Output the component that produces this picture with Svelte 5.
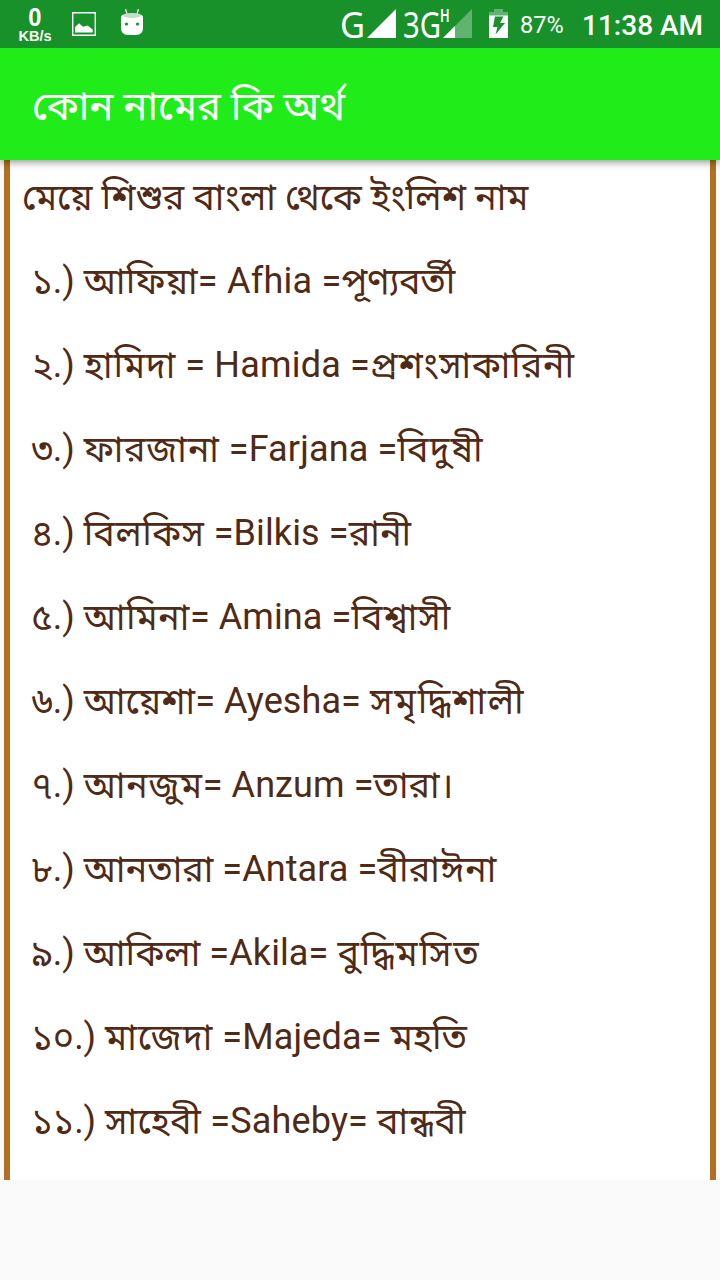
<script>
  // each row: [text, letter spacing in px] chunks
  const rows = [
    [['১', 0], ['.) ', 0], ['আফিয়া', 0.2], ['= Afhia =', 0.25], ['পূণ্যবর্তী', -0.2]],
    [['২', 0], ['.) ', 0], ['হামিদা', 0.8], [' = Hamida =', 0.2], ['প্রশংসাকারিনী', 0.65]],
    [['৩', 0], ['.) ', 0], ['ফারজানা', 0.75], [' =Farjana =', 0.15], ['বিদুষী', 1]],
    [['৪', 0], ['.) ', 0], ['বিলকিস', 0.6], [' =Bilkis =', 0.12], ['রানী', 0.2]],
    [['৫', 0], ['.) ', 0], ['আমিনা', 0.5], ['= Amina =', 0.1], ['বিশ্বাসী', 0.9]],
    [['৬', 0], ['.) ', 0], ['আয়েশা', 0], ['= Ayesha= ', 0.1], ['সমৃদ্ধিশালী', 1.6]],
    [['৭', 0], ['.) ', 0], ['আনজুম', 0.6], ['= Anzum =', 0.1], ['তারা।', 0]],
    [['৮', 0], ['.) ', 0], ['আনতারা', 0], [' =Antara =', 0.1], ['বীরাঈনা', 0.25]],
    [['৯', 0], ['.) ', 0], ['আকিলা', 0.1], [' =Akila= ', 0.1], ['বুদ্ধিমসিত', 1.9]],
    [['১০', 0], ['.) ', 0], ['মাজেদা', 1], [' =Majeda= ', 0.15], ['মহতি', 0]],
    [['১১', 0], ['.) ', 0], ['সাহেবী', 0.3], [' =Saheby= ', 0.15], ['বান্ধবী', 0.8]]
  ];

  const isBangla = (text) => /[\u0980-\u09ff]/.test(text);
</script>

<div class="screen">
  <div class="status">
    <div class="speed">
      <span class="rate">0</span>
      <span class="unit">KB/s</span>
    </div>
    <svg class="picture" width="24" height="24" viewBox="0 0 24 24">
      <path fill="none" stroke="#fff" stroke-width="1.4" d="M.7.7h22.600v22.600H.7z" />
      <path fill="#fff" d="M3 20.500V15l4-3.700 4 3.400 4.500-1.200 5.200 4v3z" />
    </svg>
    <svg class="droid" width="24" height="28" viewBox="0 0 24 28">
      <path stroke="#fff" stroke-width="1.2" d="M5.500 1l1.500 5M18.500 1L17 6" />
      <path fill="#fff" d="M1 9q0-3.500 11-3.500T23 9v11q0 7-7 7H8q-7 0-7-7z" />
      <ellipse fill="#c0e2c6" cx="12" cy="7.500" rx="9" ry="2.600" />
      <circle fill="#18912b" cx="6.500" cy="16" r="1.600" />
      <circle fill="#18912b" cx="17.500" cy="16" r="1.600" />
    </svg>
    <span class="net g">G</span>
    <svg class="signal" width="29" height="29" viewBox="0 0 29 29">
      <path fill="#fff" d="M0 29L29 0v29z" />
    </svg>
    <span class="net three">3G</span>
    <span class="hspa">H</span>
    <svg class="signal weak" width="29" height="29" viewBox="0 0 29 29">
      <path fill="#60b46d" d="M0 29L29 0v29z" />
      <path fill="#fff" d="M0 29l12-12v12z" />
    </svg>
    <svg class="battery" width="19" height="29" viewBox="0 0 19 29">
      <path fill="#60b46d" d="M0 7V3h5V0h9v3h5v4z" />
      <path fill="#fff" d="M0 6.500h19V29H0z" />
      <path fill="#18912b" d="M6 7.500h8.500L11 14h5L6.500 25.500 8.500 18H4z" />
    </svg>
    <span class="percent">87%</span>
    <span class="time">11:38 AM</span>
  </div>

  <header>
    <h1>কোন নামের কি অর্থ</h1>
  </header>

  <main>
    <h2>মেয়ে শিশুর বাংলা থেকে ইংলিশ নাম</h2>
    {#each rows as row}
      <p>{#each row as [text, spacing]}<span class:bangla={isBangla(text)} style:letter-spacing="{spacing}px">{text}</span>{/each}</p>
    {/each}
  </main>
</div>

<style>
  :global(body) {
    margin: 0;
    background: #fafafa;
  }

  .screen {
    width: 720px;
    height: 1280px;
    overflow: hidden;
    background: #fafafa;
    font-family: Roboto, 'Noto Sans', 'Noto Sans Bengali', sans-serif;
  }

  .status {
    position: relative;
    z-index: 1;
    display: flex;
    height: 48px;
    background: #18912b;
    color: #fff;
    white-space: nowrap;
  }

  .speed {
    display: flex;
    flex-direction: column;
    align-items: center;
    width: 36px;
    margin-left: 17px;
    padding-top: 5px;
    font-family: 'Liberation Sans', sans-serif;
    font-weight: bold;
  }

  .rate {
    font-size: 25px;
    line-height: 24px;
    transform: scaleX(0.95);
  }

  .unit {
    font-size: 14.5px;
    line-height: 14px;
  }

  .picture {
    margin: 12px 0 0 19px;
  }

  .droid {
    margin: 8px 0 0 24px;
  }

  .net {
    font-family: 'Noto Sans', sans-serif;
    font-size: 37px;
    line-height: 48px;
    transform-origin: left center;
  }

  .g {
    width: 27px;
    margin-left: 196px;
    transform: scaleX(0.93);
  }

  .signal {
    margin-top: 9px;
  }

  .three {
    width: 37px;
    margin-left: 7px;
    transform: scaleX(0.79);
  }

  .hspa {
    width: 10px;
    font-family: 'Noto Sans', sans-serif;
    font-size: 17px;
    font-weight: 600;
    line-height: 32px;
    transform: scaleX(0.75);
    transform-origin: left center;
  }

  .weak {
    margin-left: -7px;
  }

  .battery {
    margin: 9px 0 0 17px;
  }

  .percent {
    width: 62px;
    margin-left: 12px;
    font-size: 23.5px;
    line-height: 50px;
  }

  .time {
    font-size: 28px;
    font-weight: 500;
    line-height: 51px;
  }

  header {
    position: relative;
    height: 112px;
    background: #20ec1a;
    color: #fff;
    box-shadow: 0 2px 8px rgba(0, 0, 0, 0.45);
  }

  h1 {
    margin: 0;
    padding: 3px 0 0 32px;
    font-size: 40px;
    font-weight: 400;
    line-height: 112px;
  }

  main {
    box-sizing: border-box;
    width: 712px;
    height: 1020px;
    margin: 0 4px;
    padding-left: 12px;
    border: solid #b27020;
    border-width: 0 6px;
    background: #fff;
    color: #4f2a16;
  }

  h2,
  p {
    height: 84px;
    margin: 0;
    font-size: 36px;
    font-weight: 400;
    line-height: 84px;
    white-space: pre;
  }

  h2 {
    height: 79px;
    line-height: 76px;
  }

  p {
    padding-left: 9.5px;
  }

  .bangla {
    position: relative;
    top: 1px;
  }
</style>
